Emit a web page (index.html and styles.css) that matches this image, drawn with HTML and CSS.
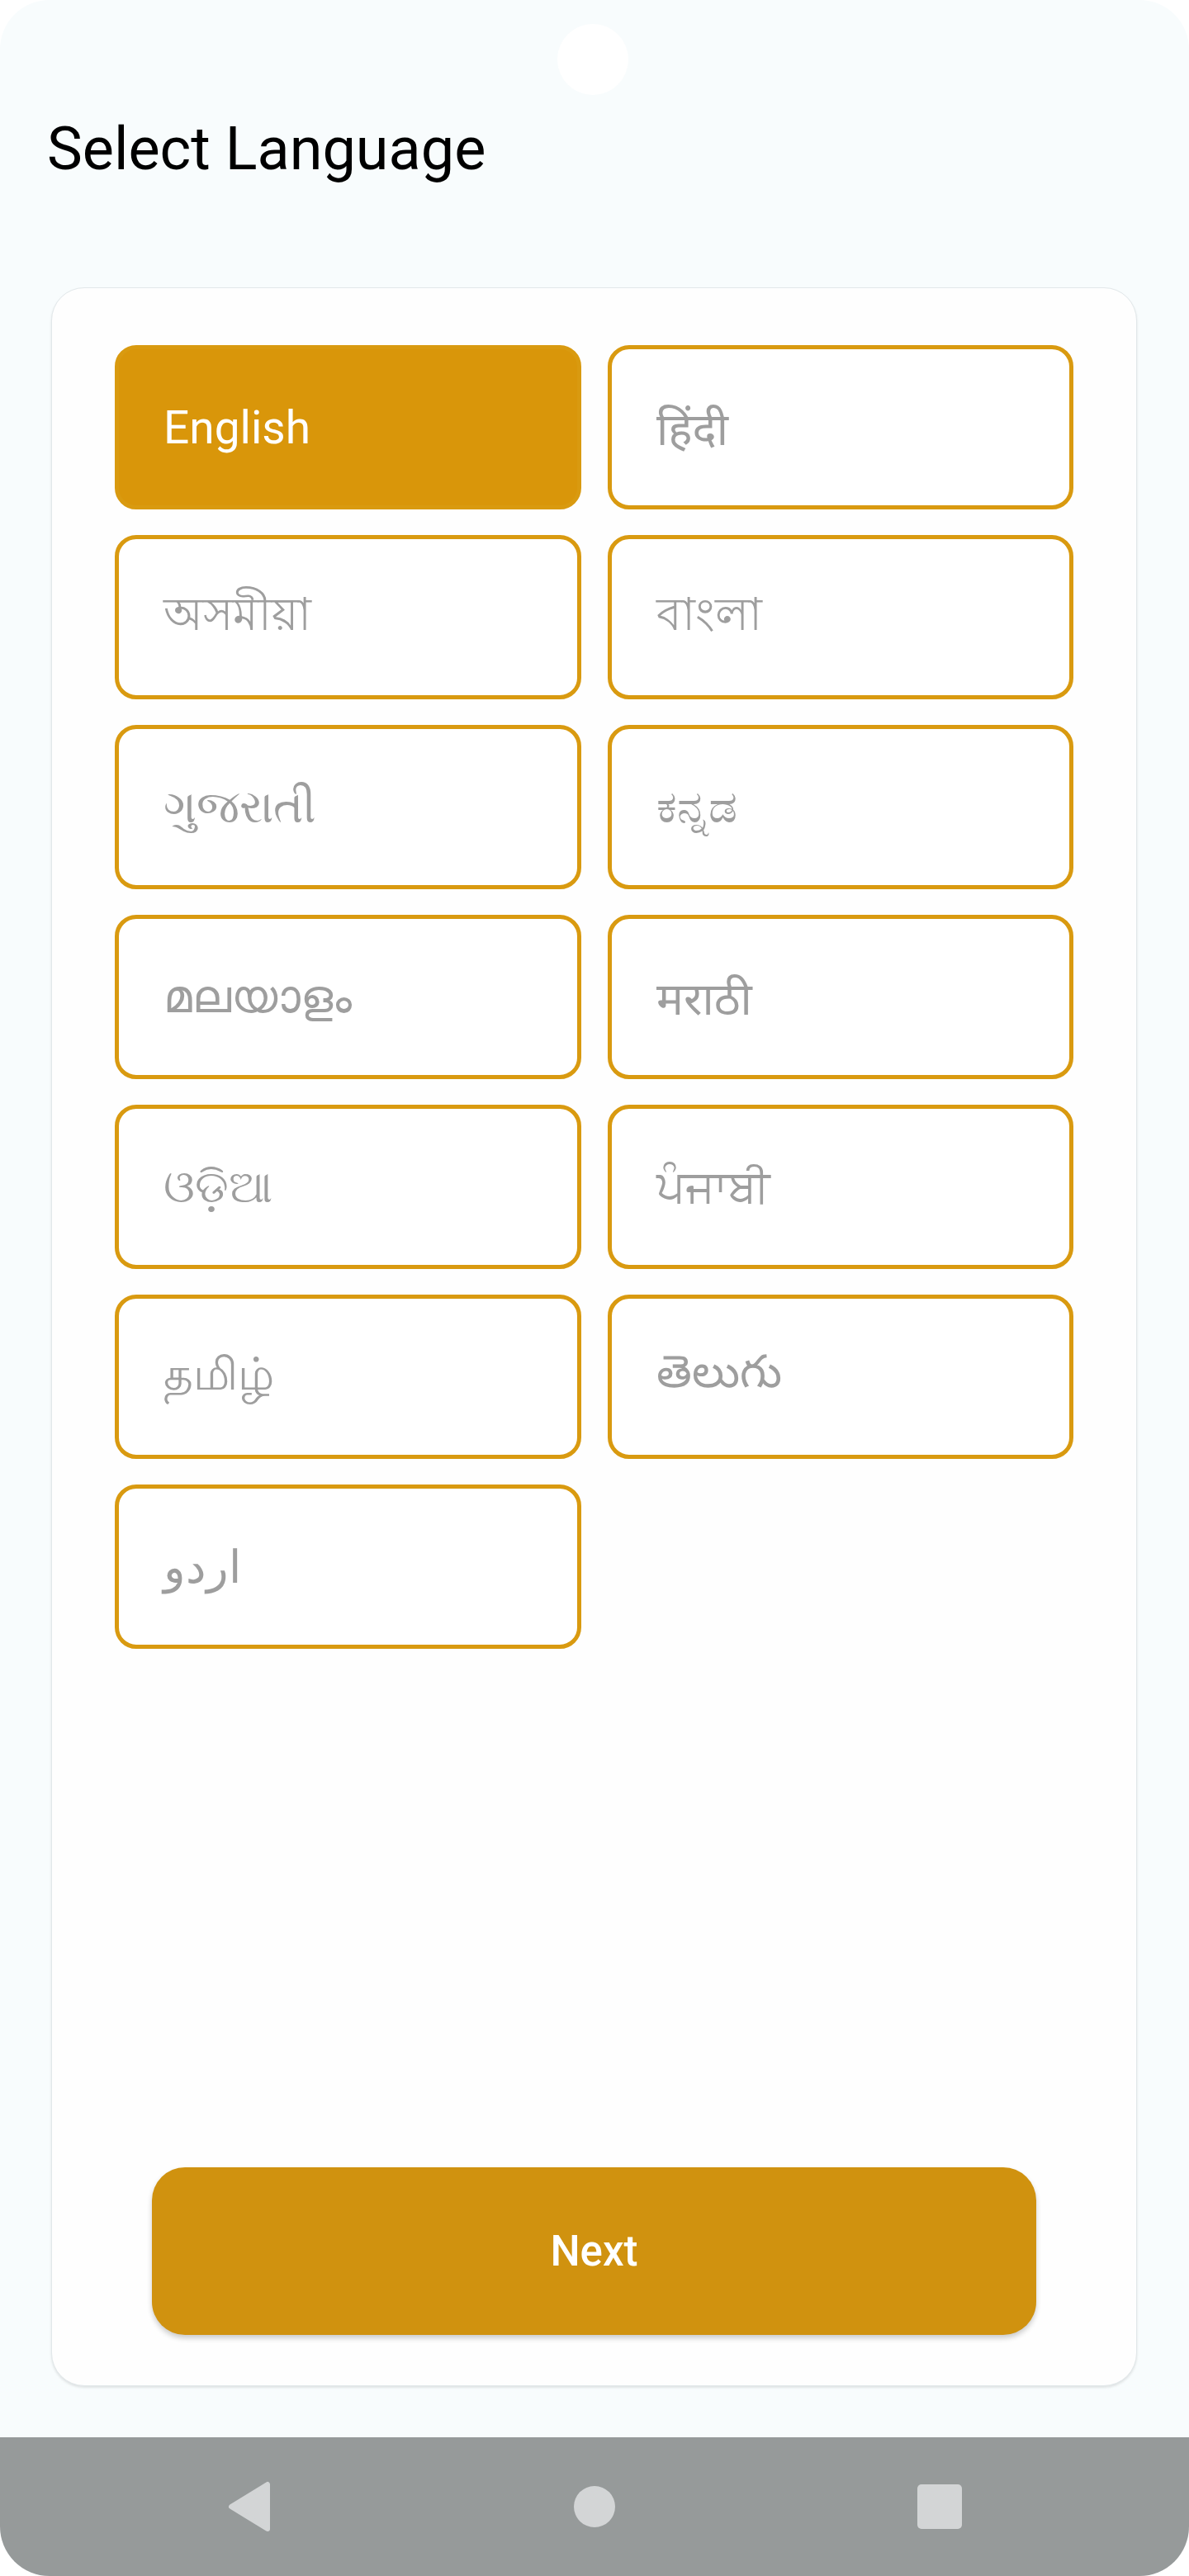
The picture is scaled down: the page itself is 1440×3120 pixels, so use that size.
FILE: index.html
```html
<!DOCTYPE html>
<html>
<head>
  <title>Select Language</title>
  <meta charset="UTF-8">
  <link rel="stylesheet" href="styles.css">
</head>
<body>
<div class="screen">
  <div class="statusbar">
    <div class="camera"></div>
  </div>

  <h1 class="title">Select Language</h1>

  <div class="card">
    <div class="lang-grid">
      <button class="lang selected">English</button>
      <button class="lang">हिंदी</button>
      <button class="lang">অসমীয়া</button>
      <button class="lang">বাংলা</button>
      <button class="lang">ગુજરાતી</button>
      <button class="lang">ಕನ್ನಡ</button>
      <button class="lang">മലയാളം</button>
      <button class="lang">मराठी</button>
      <button class="lang">ଓଡ଼ିଆ</button>
      <button class="lang">ਪੰਜਾਬੀ</button>
      <button class="lang">தமிழ்</button>
      <button class="lang">తెలుగు</button>
      <button class="lang"><span dir="rtl">اردو</span></button>
    </div>

    <button class="next-btn">Next</button>
  </div>

  <div class="navbar">
    <svg class="nav-back" width="54" height="62" viewBox="0 0 54 62">
      <path d="M5 31 L49 4 L49 58 Z" fill="#d3d5d6" stroke="#d3d5d6" stroke-width="6" stroke-linejoin="round"/>
    </svg>
    <div class="nav-home"></div>
    <div class="nav-recent"></div>
  </div>
</div>
</body>
</html>
```

FILE: styles.css
```css
body {
  margin: 0; background: #fff;
  font-family: Roboto, "Noto Sans", sans-serif;
}
.screen {
  width: 1440px; height: 3120px;
  background: #f8fcfd;
  border-radius: 60px;
  overflow: hidden;
  display: flex; flex-direction: column;
}
.statusbar {
  height: 140px; flex: none;
  display: flex; justify-content: center; align-items: flex-start;
  padding-top: 29px; box-sizing: border-box;
}
.camera {
  width: 86px; height: 86px; border-radius: 50%;
  background: #fff; margin-right: 4px;
}
.title {
  margin: 5px 0 0 57px;
  font-size: 72px; font-weight: 400; line-height: 72px;
  color: #000;
}
.card {
  margin: 131px 0 0 62px;
  width: 1315px; height: 2542px; box-sizing: border-box;
  background: #fefefe;
  border: 1px solid #e2e8ea; border-radius: 40px;
  box-shadow: 0 2px 3px rgba(0,0,0,0.1);
  padding: 69px 76px 61px;
  display: flex; flex-direction: column;
}
.lang-grid {
  display: grid;
  grid-template-columns: 565px 564px;
  column-gap: 32px; row-gap: 31px;
  grid-auto-rows: 199px;
}
.lang {
  display: flex; align-items: center;
  padding: 0 0 0 54px; margin: 0;
  background: #fff;
  border: 5px solid #d99a10; border-radius: 26px;
  font-family: Roboto, "Noto Sans", sans-serif;
  font-size: 55px; color: #9e9e9e;
  text-align: left; cursor: pointer;
}
.lang.selected {
  background: #d9960a; color: #fff;
}
.next-btn {
  margin: auto auto 0;
  width: 1071px; height: 203px;
  background: #d0920f; color: #fff;
  border: none; border-radius: 40px;
  box-shadow: 0 4px 6px rgba(0,0,0,0.2);
  font-family: Roboto, sans-serif;
  font-size: 51px; font-weight: 500;
  cursor: pointer;
}
.navbar {
  margin-top: 62px; flex: 1;
  background: #969a9a;
  display: flex; justify-content: center; align-items: center;
  gap: 366px;
}
.nav-home {
  width: 50px; height: 50px; border-radius: 50%;
  background: #d3d5d6;
}
.nav-recent {
  width: 54px; height: 54px; border-radius: 5px;
  background: #d3d5d6;
}
```
